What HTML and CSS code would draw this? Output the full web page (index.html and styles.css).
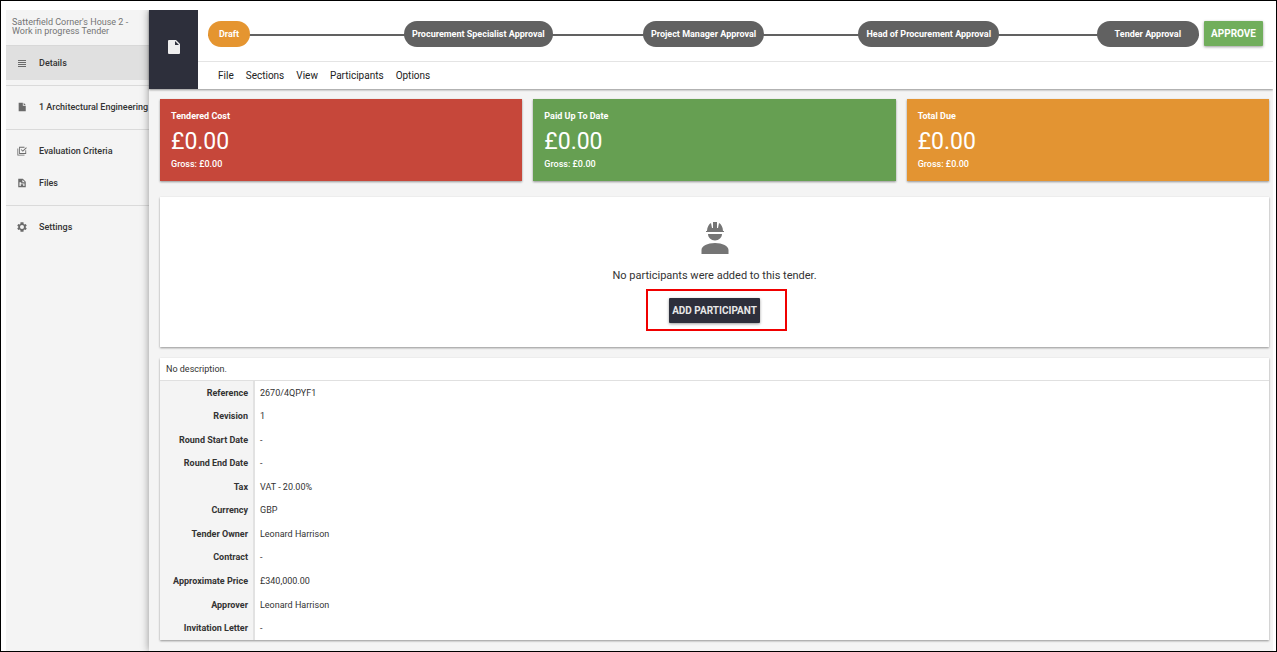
FILE: index.html
```html
<!doctype html>
<html lang="en">

<head>
    <meta charset="UTF-8">
    <meta content="width=device-width, initial-scale=1" name="viewport">
    <title>Work in progress Tender</title>
    <link rel="stylesheet" href="styles.css">
</head>

<body>
<div class="app">
    <nav class="sidebar">
        <div class="project">Satterfield Corner's House 2 - Work in progress Tender</div>
        <a class="navItem active" href="#details">
            <svg class="navIcon" viewBox="0 0 10 10"><path d="M1 2h8v1H1zM1 4h8v1H1zM1 6h8v1H1zM1 8h8v1H1z"/></svg>
            Details
        </a>
        <div class="navGroup">
            <a class="navItem" href="#section1">
                <svg class="navIcon" viewBox="0 0 24 24"><path d="M4 2h10v7h7v13H4zM16 2l5 5h-5z"/></svg>
                1 Architectural Engineering
            </a>
        </div>
        <div class="navGroup">
            <a class="navItem" href="#criteria">
                <svg class="navIcon" viewBox="0 0 24 24"><path d="M1 6h2v15h15v2H1zM5 2h13v2H7v13h13v-7h2v9H5zM9 9l1.500-1.500L14 11l8-8 1.500 1.500L14 14z"/></svg>
                Evaluation Criteria
            </a>
            <a class="navItem" href="#files">
                <svg class="navIcon" viewBox="0 0 24 24"><path fill-rule="evenodd" d="M3 2h11l7 7v13H3zM13 4v6h6zM6 10v9h3v-4h6v4h3v-6h-8v-3z"/></svg>
                Files
            </a>
        </div>
        <div class="navGroup">
            <a class="navItem" href="#settings">
                <svg class="navIcon" viewBox="2 2 20 20"><path fill-rule="evenodd" d="M19.400 13a7.500 7.500 0 0 0 0-2l2.100-1.650-2-3.460-2.490 1a7.300 7.300 0 0 0-1.700-1L15 2.500h-6l-.3 3.390a7.300 7.300 0 0 0-1.700 1l-2.490-1-2 3.460L4.600 11a7.500 7.500 0 0 0 0 2l-2.100 1.650 2 3.460 2.490-1a7.300 7.300 0 0 0 1.700 1L9 21.500h6l.3-3.390a7.300 7.300 0 0 0 1.700-1l2.490 1 2-3.460zM12 16a4 4 0 1 1 0-8 4 4 0 0 1 0 8z"/></svg>
                Settings
            </a>
        </div>
    </nav>

    <div class="page">
        <header class="topBar">
            <div class="tile">
                <svg class="tileIcon" viewBox="0 0 12 14"><path d="M1 0h7l4 4v9a1 1 0 0 1-1 1H1a1 1 0 0 1-1-1V1a1 1 0 0 1 1-1zM7 1v4h4z" fill-rule="evenodd"/></svg>
            </div>
            <div class="topMain">
                <div class="workflow">
                    <ol class="steps">
                        <li><span class="step current">Draft</span></li>
                        <li><span class="step">Procurement Specialist Approval</span></li>
                        <li><span class="step">Project Manager Approval</span></li>
                        <li><span class="step">Head of Procurement Approval</span></li>
                        <li><span class="step last">Tender Approval</span></li>
                    </ol>
                    <button class="btn approve">APPROVE</button>
                </div>
                <div class="menu">
                    <button>File</button>
                    <button>Sections</button>
                    <button>View</button>
                    <button>Participants</button>
                    <button>Options</button>
                </div>
            </div>
        </header>

        <main class="content">
            <div class="cards">
                <div class="card red">
                    <h2>Tendered Cost</h2>
                    <p class="amount">£0.00</p>
                    <p class="gross">Gross: £0.00</p>
                </div>
                <div class="card green">
                    <h2>Paid Up To Date</h2>
                    <p class="amount">£0.00</p>
                    <p class="gross">Gross: £0.00</p>
                </div>
                <div class="card orange">
                    <h2>Total Due</h2>
                    <p class="amount">£0.00</p>
                    <p class="gross">Gross: £0.00</p>
                </div>
            </div>

            <section class="panel participants">
                <svg class="worker" viewBox="0 0 28 34">
                    <path d="M6 10c0-4 2-7 4-8l1 5h1V1h4v6h1l1-5c2 1 4 4 4 8h1v1H5v-1zM7 13h14c0 3.500-3 6.500-7 6.500S7 16.500 7 13zM0.500 33v-4c0-4 6-7 13.500-7s13.500 3 13.500 7v4z"/>
                </svg>
                <p>No participants were added to this tender.</p>
                <div class="marked">
                    <button class="btn add">ADD PARTICIPANT</button>
                </div>
            </section>

            <section class="panel">
                <p class="description">No description.</p>
                <table class="details">
                    <tr><th>Reference</th><td>2670/4QPYF1</td></tr>
                    <tr><th>Revision</th><td>1</td></tr>
                    <tr><th>Round Start Date</th><td>-</td></tr>
                    <tr><th>Round End Date</th><td>-</td></tr>
                    <tr><th>Tax</th><td>VAT - 20.00%</td></tr>
                    <tr><th>Currency</th><td>GBP</td></tr>
                    <tr><th>Tender Owner</th><td>Leonard Harrison</td></tr>
                    <tr><th>Contract</th><td>-</td></tr>
                    <tr><th>Approximate Price</th><td>£340,000.00</td></tr>
                    <tr><th>Approver</th><td>Leonard Harrison</td></tr>
                    <tr><th>Invitation Letter</th><td>-</td></tr>
                </table>
            </section>
        </main>
    </div>
</div>
</body>

</html>
```
FILE: styles.css
```css
* {
    box-sizing: border-box;
}

body {
    margin: 0;
    min-height: 100vh;
    display: flex;
    padding: 9px 3px 0 5px;
    border: 1px solid #000;
    background-color: #fff;
    color: #333;
    font-family: Roboto, "Liberation Sans", sans-serif;
    font-size: 9px;
    line-height: 12px;
}

h2, p, ol {
    margin: 0;
    padding: 0;
}

button {
    font-family: inherit;
    font-size: 10px;
    line-height: inherit;
    border: none;
    cursor: pointer;
}

.app {
    flex: 1;
    display: flex;
    background-color: #f4f4f4;
}

.sidebar {
    width: 143px;
    flex: none;
}

.project {
    height: 36px;
    padding: 8px 6px 0;
    line-height: 9px;
    color: #757575;
    border-bottom: 1px solid #d8d8d8;
}

.navItem {
    display: flex;
    align-items: center;
    gap: 12px;
    height: 32px;
    padding-left: 11px;
    color: #333;
    font-weight: 500;
    text-decoration: none;
    white-space: nowrap;
}

.navItem.active {
    height: 34px;
    margin-bottom: 5px;
    background-color: #e0e0e0;
}

.navIcon {
    flex: none;
    width: 10px;
    height: 10px;
    fill: #6a6a6a;
}

.navGroup {
    padding: 5px 0 6px;
    border-top: 1px solid #dadada;
}

.page {
    flex: 1;
    min-width: 0;
    box-shadow: 0 0 8px rgba(0, 0, 0, .4);
    background-color: #f4f4f4;
    clip-path: inset(0 0 0 -10px);
}

.topBar {
    display: flex;
    background-color: #fff;
    box-shadow: 0 1px 2px rgba(0, 0, 0, .4);
}

.tile {
    width: 49px;
    padding-bottom: 5px;
    display: flex;
    align-items: center;
    justify-content: center;
    background-color: #2d2f3b;
}

.tileIcon {
    width: 12px;
    height: 14px;
    fill: #eee;
}

.topMain {
    flex: 1;
}

.workflow {
    display: flex;
    gap: 5px;
    padding: 11px 10px 14px;
    border-bottom: 1px solid #e4e4e4;
}

.steps {
    flex: 1;
    display: flex;
    list-style: none;
    background: linear-gradient(#616161, #616161) no-repeat 0 13px / 100% 2px;
}

.steps li {
    flex: 10 1 0;
    display: flex;
    justify-content: center;
}

.steps li:first-child {
    flex-grow: 7;
    justify-content: flex-start;
}

.steps li:last-child {
    flex-grow: 7;
    justify-content: flex-end;
}

.step {
    padding: 7px 8px;
    border-radius: 13px;
    background-color: #616161;
    color: #fff;
    font-weight: 700;
    white-space: nowrap;
}

.step.current {
    padding: 7px 11px;
    background-color: #e59530;
}

.step.last {
    padding: 7px 18px;
}

.btn {
    height: 25px;
    border-radius: 1px;
    color: #fff;
    font-weight: 700;
    box-shadow: 0 1px 3px rgba(0, 0, 0, .4);
}

.approve {
    padding: 0 7px;
    background-color: #71ae5c;
}

.menu {
    display: flex;
    gap: 12px;
    padding: 8px 20px 7px;
}

.menu button {
    padding: 0;
    background: none;
    color: #222;
}

.content {
    padding: 10px 4px 11px 11px;
}

.cards {
    display: grid;
    grid-template-columns: repeat(3, 1fr);
    gap: 11px;
    margin-bottom: 16px;
}

.card {
    padding: 11px;
    color: #fff;
    box-shadow: 0 1px 2px rgba(0, 0, 0, .4);
}

.card h2 {
    font-size: 9px;
    font-weight: 700;
}

.card.red {
    background-color: #c6473a;
}

.card.green {
    background-color: #669f52;
}

.card.orange {
    background-color: #e39432;
}

.amount {
    margin: 5px 0 1px;
    font-size: 23px;
    line-height: 30px;
}

.gross {
    font-weight: 500;
}

.panel {
    background-color: #fff;
    box-shadow: 0 1px 2px rgba(0, 0, 0, .4);
}

.participants {
    display: flex;
    flex-direction: column;
    align-items: center;
    padding: 24px 0;
    margin-bottom: 11px;
    font-size: 11px;
}

.participants p {
    margin: 15px 0 16px;
}

.worker {
    width: 28px;
    height: 34px;
    fill: #757575;
}

.marked {
    position: relative;
}

.marked .btn {
    display: block;
}

/* highlight frame round the button */
.marked::after {
    content: "";
    position: absolute;
    inset: -9px -27px -8px -23px;
    border: 2px solid #f00000;
    pointer-events: none;
}

.add {
    padding: 0 3px;
    background-color: #2d2f3b;
    color: #e8e8e8;
}

.description {
    padding: 5px 6px;
    border-bottom: 1px solid #e0e0e0;
}

.details {
    width: 100%;
    height: 259px;
    border-collapse: collapse;
}

.details th {
    width: 94px;
    padding: 0 5px 0 0;
    background-color: #f4f4f4;
    border-right: 2px solid #e2e2e2;
    text-align: right;
    white-space: nowrap;
}

.details td {
    padding: 0 5px;
}
```
